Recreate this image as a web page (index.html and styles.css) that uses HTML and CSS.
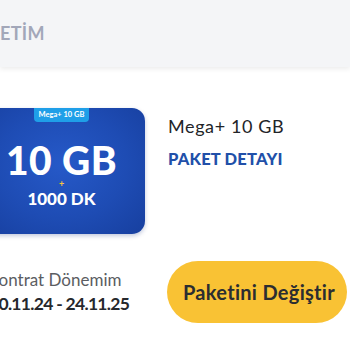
FILE: index.html
```html
<!DOCTYPE html>
<html lang="tr">
<head>
<meta charset="utf-8">
<link rel="stylesheet" href="styles.css">
</head>
<body>
<div class="page">
  <header class="header">
    <span class="header-title">ETİM</span>
  </header>
  <section class="plan">
    <div class="card">
      <div class="badge">Mega+ 10 GB</div>
      <div class="card-body">
        <div class="gb">10 GB</div>
        <div class="plus">+</div>
        <div class="dk">1000 DK</div>
      </div>
    </div>
    <div class="plan-info">
      <div class="plan-name">Mega+ 10 GB</div>
      <a class="plan-link">PAKET DETAYI</a>
    </div>
  </section>
  <section class="contract">
    <div class="contract-info">
      <div class="contract-label">Kontrat Dönemim</div>
      <div class="contract-dates">20.11.24 - 24.11.25</div>
    </div>
    <button class="change-btn">Paketini Değiştir</button>
  </section>
</div>
</body>
</html>
```

FILE: styles.css
```css
html, body {
  margin: 0;
  padding: 0;
  background: #ffffff;
}
body {
  width: 350px;
  height: 350px;
  overflow: hidden;
  font-family: "Lato", "Noto Sans", sans-serif;
}
.page {
  width: 350px;
}
.header {
  height: 67px;
  background: #f4f5f7;
  box-shadow: 0 2px 5px rgba(0, 0, 0, 0.08);
  padding-top: 22px;
  box-sizing: border-box;
}
.header-title {
  font-size: 18px;
  font-weight: 700;
  color: #a2a7b9;
  letter-spacing: 0.3px;
}
.plan {
  display: flex;
  align-items: flex-start;
  margin-top: 41px;
  margin-left: -22px;
}
.card {
  width: 167px;
  height: 126px;
  border-radius: 13px;
  background: radial-gradient(ellipse at 50% 45%, #2659c8 0%, #1e4cb4 55%, #173f9f 100%);
  box-shadow: 0 2px 4px rgba(10, 40, 120, 0.25);
  display: flex;
  flex-direction: column;
  align-items: center;
  flex-shrink: 0;
}
.badge {
  background: #1f9fe8;
  color: #ffffff;
  font-size: 7.5px;
  font-weight: 700;
  padding: 2px 5px 3px;
  border-radius: 0 0 4px 4px;
  line-height: 9px;
}
.card-body {
  display: flex;
  flex-direction: column;
  align-items: center;
  margin-top: 19px;
}
.gb {
  color: #ffffff;
  font-size: 39px;
  font-weight: 900;
  line-height: 38px;
  letter-spacing: 0.5px;
}
.plus {
  color: #f6c33d;
  font-size: 9px;
  font-weight: 700;
  line-height: 10px;
  margin-top: 0;
}
.dk {
  color: #ffffff;
  font-size: 17px;
  font-weight: 900;
  line-height: 18px;
  margin-top: 1px;
}
.plan-info {
  margin-left: 23px;
  padding-top: 7px;
  display: flex;
  flex-direction: column;
}
.plan-name {
  font-size: 18px;
  color: #222428;
  line-height: 22px;
  letter-spacing: 0.6px;
}
.plan-link {
  margin-top: 12px;
  font-size: 16.5px;
  font-weight: 900;
  color: #2150a9;
  line-height: 20px;
  letter-spacing: 0.2px;
}
.contract {
  display: flex;
  align-items: center;
  margin-top: 27px;
  margin-left: -12px;
}
.contract-info {
  width: 179px;
  flex-shrink: 0;
}
.contract-label {
  font-size: 17px;
  color: #5b5d62;
  line-height: 22px;
}
.contract-dates {
  font-size: 17.5px;
  font-weight: 700;
  color: #26282c;
  line-height: 24px;
  margin-top: 1px;
  margin-left: 1px;
  letter-spacing: -0.7px;
}
.change-btn {
  width: 180px;
  height: 62px;
  border: none;
  border-radius: 31px;
  background: #f9c234;
  color: #2b2d31;
  font-family: "Lato", "Noto Sans", sans-serif;
  font-size: 20px;
  font-weight: 700;
  letter-spacing: 0.3px;
  padding: 0 0 0 4px;
  flex-shrink: 0;
}
```
